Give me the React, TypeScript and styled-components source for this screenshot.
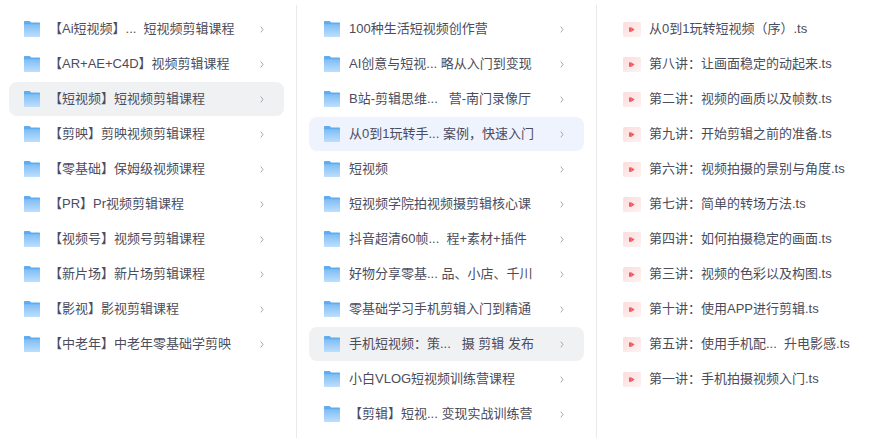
import React from 'react';
import styled, { createGlobalStyle } from 'styled-components';

const GlobalStyle = createGlobalStyle`
  html, body {
    margin: 0;
    padding: 0;
    background: #fff;
    overflow: hidden;
  }
  body {
    font-family: "Liberation Sans", "Noto Sans CJK SC", sans-serif;
  }
`;

type Tone = 'none' | 'hover' | 'active';

interface FolderItem {
  name: string;
  tone?: Tone;
}

const categories: FolderItem[] = [
  { name: '【Ai短视频】...  短视频剪辑课程' },
  { name: '【AR+AE+C4D】视频剪辑课程' },
  { name: '【短视频】短视频剪辑课程', tone: 'hover' },
  { name: '【剪映】剪映视频剪辑课程' },
  { name: '【零基础】保姆级视频课程' },
  { name: '【PR】Pr视频剪辑课程' },
  { name: '【视频号】视频号剪辑课程' },
  { name: '【新片场】新片场剪辑课程' },
  { name: '【影视】影视剪辑课程' },
  { name: '【中老年】中老年零基础学剪映' },
];

const courses: FolderItem[] = [
  { name: '100种生活短视频创作营' },
  { name: 'AI创意与短视... 略从入门到变现' },
  { name: 'B站-剪辑思维...   营-南门录像厅' },
  { name: '从0到1玩转手... 案例，快速入门', tone: 'active' },
  { name: '短视频' },
  { name: '短视频学院拍视频摄剪辑核心课' },
  { name: '抖音超清60帧...  程+素材+插件' },
  { name: '好物分享零基... 品、小店、千川' },
  { name: '零基础学习手机剪辑入门到精通' },
  { name: '手机短视频：策...   摄 剪辑 发布', tone: 'hover' },
  { name: '小白VLOG短视频训练营课程' },
  { name: '【剪辑】短视... 变现实战训练营' },
];

const videos = [
  '从0到1玩转短视频（序）.ts',
  '第八讲：让画面稳定的动起来.ts',
  '第二讲：视频的画质以及帧数.ts',
  '第九讲：开始剪辑之前的准备.ts',
  '第六讲：视频拍摄的景别与角度.ts',
  '第七讲：简单的转场方法.ts',
  '第四讲：如何拍摄稳定的画面.ts',
  '第三讲：视频的色彩以及构图.ts',
  '第十讲：使用APP进行剪辑.ts',
  '第五讲：使用手机配...  升电影感.ts',
  '第一讲：手机拍摄视频入门.ts',
];

const FolderIcon = () => (
  <svg width="16" height="16" viewBox="0 0 16 16">
    <defs>
      <linearGradient id="folderFront" x1="0" y1="0" x2="0" y2="1">
        <stop offset="0" stopColor="#7fbdf5" />
        <stop offset="1" stopColor="#bddffd" />
      </linearGradient>
    </defs>
    <path d="M0 1C0 .4.4 0 1 0h4.6l1.6 1.6H15c.6 0 1 .4 1 1V8H0z" fill="#5fadf0" />
    <path d="M0 3.2h15c.6 0 1 .4 1 1V15c0 .6-.4 1-1 1H1c-.6 0-1-.4-1-1z" fill="url(#folderFront)" />
    <rect x="13" y="5.4" width="1" height="1" fill="#7db8ee" />
  </svg>
);

const VideoIcon = () => (
  <svg width="18" height="15" viewBox="0 0 18 15">
    <defs>
      <linearGradient id="videoBack" x1="0" y1="0" x2="1" y2="1">
        <stop offset="0" stopColor="#fcdcdc" />
        <stop offset="1" stopColor="#fdf3f3" />
      </linearGradient>
    </defs>
    <rect width="18" height="15" rx="1.5" fill="url(#videoBack)" />
    <rect x="6" y="5.4" width="2.6" height="4.4" fill="#f0585e" />
    <path d="M8.4 5.4l3.2 2.2-3.2 2.2z" fill="#f0585e" />
  </svg>
);

const Chevron = () => (
  <svg width="4" height="7" viewBox="0 0 4 7" fill="none">
    <path d="M.8.6L3 3.5.8 6.4" stroke="#9a9ea8" strokeWidth=".9" />
  </svg>
);

const App: React.FC = () => (
  <>
    <GlobalStyle />
    <Page>
      <Column>
        {categories.map((item) => (
          <Row key={item.name} $tone={item.tone ?? 'none'}>
            <FolderIcon />
            <FolderLabel>{item.name}</FolderLabel>
            <Chevron />
          </Row>
        ))}
      </Column>
      <Column>
        {courses.map((item) => (
          <Row key={item.name} $tone={item.tone ?? 'none'}>
            <FolderIcon />
            <FolderLabel>{item.name}</FolderLabel>
            <Chevron />
          </Row>
        ))}
      </Column>
      <FileColumn>
        {videos.map((name) => (
          <FileRow key={name}>
            <VideoIcon />
            <Label>{name}</Label>
          </FileRow>
        ))}
      </FileColumn>
    </Page>
  </>
);

const Page = styled.div`
  display: flex;
  width: 886px;
  height: 438px;
  padding-top: 5px;
  box-sizing: border-box;
  background: #fff;
`;

const Column = styled.div`
  display: flex;
  flex-direction: column;
  gap: 1px;
  width: 300px;
  padding: 7px 12px 0 9px;
  box-sizing: border-box;
  border-right: 1px solid #e9e9eb;

  &:first-child {
    width: 297px;
  }

  &:nth-child(2) {
    padding-left: 12px;
  }
`;

const FileColumn = styled.div`
  display: flex;
  flex-direction: column;
  gap: 1px;
  flex: 1;
  padding: 7px 12px 0 26px;
`;

const Row = styled.div<{ $tone: Tone }>`
  display: flex;
  align-items: center;
  flex: 0 0 34px;
  padding: 0 20px 0 15px;
  border-radius: 8px;
  background: ${({ $tone }) =>
    $tone === 'hover' ? '#f0f1f3' : $tone === 'active' ? '#eff3fe' : 'transparent'};

  svg:last-child {
    margin-left: auto;
  }
`;

const FileRow = styled.div`
  display: flex;
  align-items: center;
  flex: 0 0 34px;
`;

const Label = styled.span`
  margin-left: 8px;
  font-size: 13px;
  line-height: 20px;
  color: #4b4c5c;
  white-space: pre;
`;

const FolderLabel = styled(Label)`
  margin-left: 9px;
`;

export default App;
